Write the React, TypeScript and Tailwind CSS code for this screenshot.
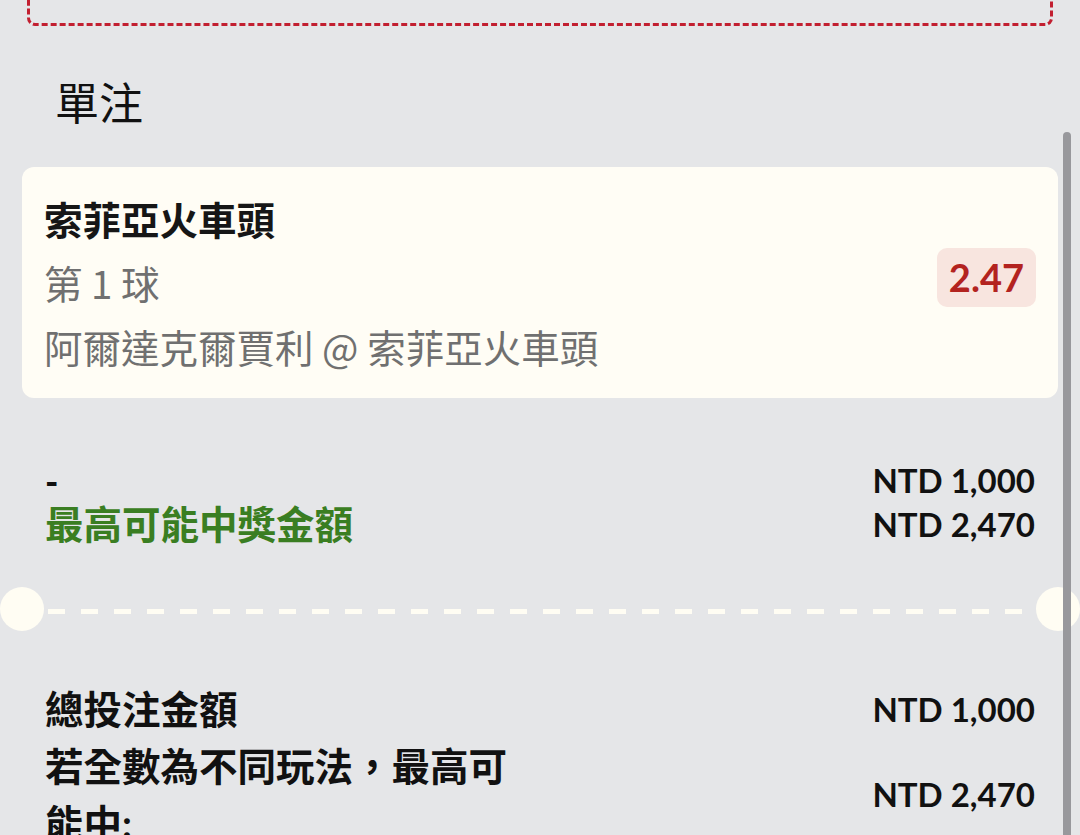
const font = "font-['Lato','Noto_Sans_CJK_TC',sans-serif]";
const cjk = "font-['Noto_Sans_CJK_TC','Noto_Sans',sans-serif]";

const Divider = () => (
  <div className="flex items-center h-[44px]">
    <div className="w-[44px] h-[44px] rounded-full bg-[#fffdf3] shrink-0" />
    <div className="flex-1 mx-[4px] h-[5px] mt-[4px] bg-[repeating-linear-gradient(to_right,#fffdf3_0_17px,transparent_17px_33px)]" />
    <div className="w-[44px] h-[44px] rounded-full bg-[#fffdf3] shrink-0" />
  </div>
);

export default function App() {
  return (
    <div className={`relative w-[1080px] h-[835px] overflow-hidden bg-[#e5e6e8] ${font}`}>
      {/* previous block, mostly scrolled off */}
      <div className="mx-[27px] -mt-[100px] h-[126px] rounded-[8px] border-[3px] border-dashed border-[#c21f30]" />

      <h2 className={`pl-[55px] mt-[45px] text-[44px] leading-[60px] text-[#111] ${cjk}`}>單注</h2>

      <div className="mt-[36px] mx-[22px] rounded-[12px] bg-[#fffdf5] px-[22px] pt-[19px] pb-[20px] flex items-center justify-between">
        <div className={`text-[38.5px] leading-[64px] ${cjk}`}>
          <div className="font-bold text-[#161616]">索菲亞火車頭</div>
          <div className="text-[#707070]">第 1 球</div>
          <div className="text-[#707070]">阿爾達克爾賈利 @ 索菲亞火車頭</div>
        </div>
        <div className="-mt-[10px] rounded-[10px] bg-[#f8e5df] px-[12px] h-[59px] flex items-center text-[38px] font-bold text-[#b3231f]">
          2.47
        </div>
      </div>

      <div className="mt-[61px] px-[45px]">
        <div className="flex items-center justify-between h-[44px]">
          <span className="text-[36px] font-black text-[#111]">-</span>
          <span className="text-[33px] font-bold text-[#111]">NTD 1,000</span>
        </div>
        <div className="flex items-center justify-between h-[44px]">
          <span className="text-[38.5px] font-bold text-[#3a7e22]">最高可能中獎金額</span>
          <span className="text-[33px] font-bold text-[#111]">NTD 2,470</span>
        </div>
      </div>

      <div className="mt-[40px]">
        <Divider />
      </div>

      <div className="mt-[50px] px-[45px]">
        <div className="flex items-center justify-between">
          <span className="text-[38.5px] leading-[57px] font-bold text-[#111]">總投注金額</span>
          <span className="text-[33px] font-bold text-[#111]">NTD 1,000</span>
        </div>
        <div className="flex items-center justify-between">
          <p className="w-[475px] text-[38.5px] leading-[57px] font-bold text-[#111]">若全數為不同玩法，最高可能中:</p>
          <span className="text-[33px] font-bold text-[#111]">NTD 2,470</span>
        </div>
      </div>

      {/* scroll indicator */}
      <div className="absolute left-[1063px] top-[132px] w-[8px] h-[760px] rounded-full bg-[#98989c]" />
    </div>
  );
}
